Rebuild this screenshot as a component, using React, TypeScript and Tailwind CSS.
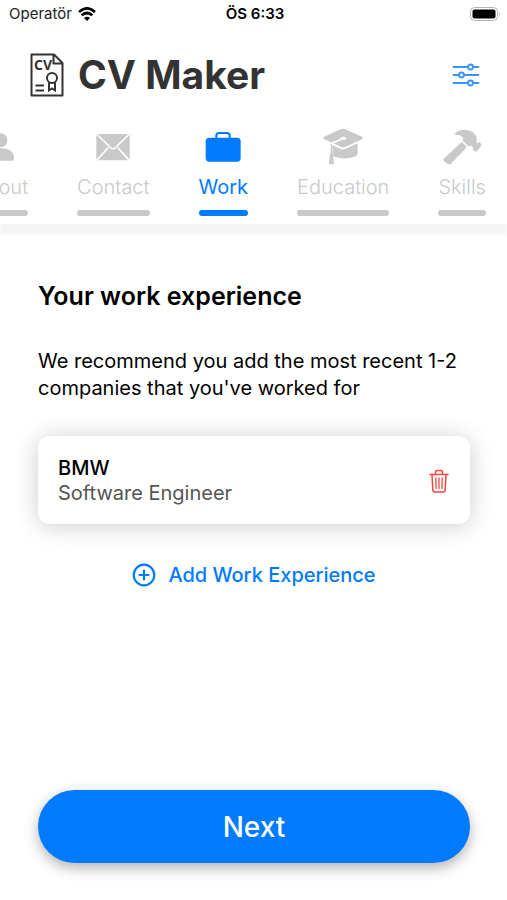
import React, { useState } from 'react';

// --- Types ---
type IconProps = { className?: string };

interface Tab {
  id: string;
  label: string;
  icon: React.FC<IconProps>;
}

interface Job {
  id: number;
  company: string;
  position: string;
}

// --- Icons ---
const PersonIcon = ({ className }: IconProps) => (
  <svg viewBox="-60 0 120 120" fill="currentColor" className={className} aria-hidden="true">
    <ellipse cx="0" cy="40" rx="19" ry="21" />
    <path d="M-39 93c0-19 16-29 39-29s39 10 39 29c0 6-1 8-5 8h-68c-4 0-6-2-6-8z" />
  </svg>
);

const MailIcon = ({ className }: IconProps) => (
  <svg viewBox="-60 0 120 120" className={className} aria-hidden="true">
    <rect x="-50" y="21" width="100" height="79" rx="5" fill="currentColor" />
    <path
      d="M-49 21l43 42q6 6 12 0l43-42M-49 100l35-38M49 100L14 62"
      fill="none"
      stroke="white"
      strokeWidth="5"
    />
  </svg>
);

const BriefcaseIcon = ({ className }: IconProps) => (
  <svg viewBox="-60 0 120 120" fill="currentColor" className={className} aria-hidden="true">
    <rect x="-52" y="32" width="105" height="72" rx="11" />
    <path d="M-20 36V26q0-8 8-8h24q8 0 8 8v10" fill="none" stroke="currentColor" strokeWidth="6" />
  </svg>
);

const EducationIcon = ({ className }: IconProps) => (
  <svg viewBox="-60 0 120 120" fill="currentColor" className={className} aria-hidden="true">
    <path d="M-32 54L-8 66q7 3 14 0l38-17v31q0 4-4 6c-18 11-51 10-68 2q-4-2-4-6z" />
    <path
      d="M-6 6q5-2 11 0l52 23q6 4 0 8L7 60q-6 3-12 0l-52-24q-6-4 0-7z"
      stroke="white"
      strokeWidth="6"
      paintOrder="stroke"
    />
    <path d="M1 34L-31 48q-4 2-4 7v22" fill="none" stroke="white" strokeWidth="5" />
    <ellipse cx="1" cy="34" rx="9" ry="5" fill="white" />
    <path d="M-35 52v32" stroke="currentColor" strokeWidth="4" />
    <path d="M-39 82q4-4 8 0l4 27q0 3-3 3h-9q-3 0-3-3z" />
  </svg>
);

const HammerIcon = ({ className }: IconProps) => (
  <svg viewBox="0 0 120 120" fill="currentColor" className={className} aria-hidden="true">
    <path d="M5 96l51-49q3-3 6 0l10 10q3 3 0 6l-45 47q-5 4-9 1l-13-9q-4-3 0-6z" />
    <path d="M38 20C50 6 72 5 87 13c13 7 18 16 17 27l-1 6 5 4 4-4q2-2 4 1l1 7q1 3-1 6l-12 13q-3 3-6 0l-6-6q-2-3 1-6l-5-5q-5 4-10 0L62 41c6-10-3-17-21-18-4 0-5-1-3-3z" />
  </svg>
);

const SlidersIcon = ({ className }: IconProps) => (
  <svg
    viewBox="0 0 28 24"
    fill="white"
    stroke="currentColor"
    strokeWidth="1.8"
    strokeLinecap="round"
    className={className}
    aria-hidden="true"
  >
    <path d="M1.500 4h25M1.500 12h25M1.500 20h25" />
    <circle cx="18.500" cy="4" r="2.500" />
    <circle cx="9.500" cy="12" r="2.500" />
    <circle cx="18.500" cy="20" r="2.500" />
  </svg>
);

const TrashIcon = ({ className }: IconProps) => (
  <svg
    viewBox="0 0 20 24"
    fill="none"
    stroke="currentColor"
    strokeWidth="1.5"
    strokeLinecap="round"
    strokeLinejoin="round"
    className={className}
    aria-hidden="true"
  >
    <path d="M1 5.500h18M6.500 5.500V3Q6.500 1.500 8 1.500h4Q13.500 1.500 13.500 3v2.500" />
    <path d="M3 5.500l.8 15.500Q3.900 23 6 23h8q2.100 0 2.200-2L17 5.500" />
    <path d="M6.800 9l.3 10.500M10 9v10.500M13.200 9l-.3 10.500" strokeWidth="1.3" />
  </svg>
);

const AddIcon = ({ className }: IconProps) => (
  <svg
    viewBox="0 0 24 24"
    fill="none"
    stroke="currentColor"
    strokeWidth="2.200"
    strokeLinecap="round"
    className={className}
    aria-hidden="true"
  >
    <circle cx="12" cy="12" r="10.300" />
    <path d="M12 7.500v9M7.500 12h9" />
  </svg>
);

const WifiIcon = ({ className }: IconProps) => (
  <svg viewBox="0 0 54 42" fill="none" stroke="black" strokeWidth="8" className={className} aria-hidden="true">
    <path d="M3 15Q27-7 51 15" />
    <path d="M11 25q16-14 32 0" />
    <path d="M27 42l-9-9q9-7 18 0z" fill="black" stroke="none" />
  </svg>
);

const BatteryIcon = ({ className }: IconProps) => (
  <svg viewBox="0 0 31 14" className={className} aria-hidden="true">
    <rect x="0.500" y="0.500" width="27" height="13" rx="4" fill="white" stroke="#b5b5b5" />
    <rect x="2.500" y="2.500" width="23" height="9" rx="2" fill="black" />
    <path d="M29 5q2 2 0 4z" fill="#b5b5b5" />
  </svg>
);

const Logo = ({ className }: IconProps) => (
  <svg
    viewBox="0 0 34 44"
    fill="none"
    stroke="currentColor"
    strokeWidth="2"
    className={className}
    aria-hidden="true"
  >
    <path d="M1.500 1.500h22.500l8.500 8.500v32.500h-31zM23.500 2v8.500h8.500" strokeLinejoin="round" />
    <path d="M5.500 32.500h8.500M5.500 37.500h8.500" />
    <circle cx="22" cy="25" r="5" />
    <path d="M19 29.500v8l3-2 3 2v-8" />
    <text
      x="4"
      y="17"
      fontSize="14"
      fontWeight="700"
      fill="currentColor"
      stroke="none"
      className="font-['Open_Sans',sans-serif]"
    >
      CV
    </text>
  </svg>
);

const tabs: Tab[] = [
  { id: 'about', label: 'About', icon: PersonIcon },
  { id: 'contact', label: 'Contact', icon: MailIcon },
  { id: 'work', label: 'Work', icon: BriefcaseIcon },
  { id: 'education', label: 'Education', icon: EducationIcon },
  { id: 'skills', label: 'Skills', icon: HammerIcon },
];

// --- Components ---
const StatusBar = () => (
  <div className="grid grid-cols-3 items-center h-[27px] pl-[9px] pr-[6px] text-[15px] leading-5">
    <div className="flex items-center gap-[6px] text-[#222]">
      <span>Operatör</span>
      <WifiIcon className="w-[18px] h-[14px]" />
    </div>
    <span className="text-center font-semibold">ÖS 6:33</span>
    <BatteryIcon className="w-[31px] h-[14px] justify-self-end" />
  </div>
);

const Header = () => (
  <header className="flex items-center justify-between h-24 pl-[30px] pr-[27px]">
    <div className="flex items-center gap-[14px] text-[#333]">
      <Logo className="w-[34px] h-[44px]" />
      <h1 className="text-[39px] leading-[48px] font-bold">CV Maker</h1>
    </div>
    <button type="button" aria-label="Settings" className="text-[#3b93f8]">
      <SlidersIcon className="w-7 h-6" />
    </button>
  </header>
);

const TabBar = ({ active, onSelect }: { active: string; onSelect: (id: string) => void }) => (
  <nav className="overflow-hidden pt-1 pb-2">
    <div className="flex gap-[49px] -ml-[27px]">
      {tabs.map((tab) => (
        <button
          key={tab.id}
          type="button"
          onClick={() => onSelect(tab.id)}
          className={`shrink-0 flex flex-col items-center ${
            active === tab.id ? 'text-[#007aff]' : 'text-[#c9c9c9]'
          }`}
        >
          <tab.icon className="w-10 h-10" />
          <span className={`mt-[6px] text-xl leading-7 ${active === tab.id ? 'font-normal' : 'font-light'}`}>
            {tab.label}
          </span>
          <span className="mt-[9px] w-full h-[6px] rounded-full bg-current" />
        </button>
      ))}
    </div>
  </nav>
);

const JobCard = ({ job, onRemove }: { job: Job; onRemove: () => void }) => (
  <li className="flex items-center justify-between rounded-xl bg-white px-5 pt-5 pb-[18px] shadow-[0_2px_24px_rgba(0,0,0,0.2)]">
    <div className="text-xl leading-[25px]">
      <h3 className="font-medium">{job.company}</h3>
      <p className="text-[#555]">{job.position}</p>
    </div>
    <button type="button" aria-label="Delete" onClick={onRemove} className="text-[#f4483e]">
      <TrashIcon className="w-[22px] h-6" />
    </button>
  </li>
);

export default function App() {
  const [activeTab, setActiveTab] = useState('work');
  const [jobs, setJobs] = useState<Job[]>([{ id: 1, company: 'BMW', position: 'Software Engineer' }]);

  const addJob = () => setJobs([...jobs, { id: Date.now(), company: 'Company', position: 'Position' }]);

  return (
    <div className="min-h-screen flex flex-col bg-white text-black font-['Inter',sans-serif]">
      <div className="bg-white shadow-[0_11px_3px_rgba(0,0,0,0.04)]">
        <StatusBar />
        <Header />
        <TabBar active={activeTab} onSelect={setActiveTab} />
      </div>

      <main className="flex-1 flex flex-col pl-[38px] pr-[37px] pt-14 pb-[37px]">
        <h2 className="text-[25px] leading-8 font-semibold">Your work experience</h2>
        <p className="mt-9 text-xl leading-[27px]">
          We recommend you add the most recent 1-2 companies that you've worked for
        </p>

        <ul className="mt-[34px] space-y-5">
          {jobs.map((job) => (
            <JobCard key={job.id} job={job} onRemove={() => setJobs(jobs.filter((j) => j.id !== job.id))} />
          ))}
        </ul>

        <button
          type="button"
          onClick={addJob}
          className="mt-9 self-center flex items-center gap-3 text-xl leading-[30px] font-medium text-[#007aff]"
        >
          <AddIcon className="w-6 h-6" />
          Add Work Experience
        </button>

        <button
          type="button"
          className="mt-auto h-[73px] shrink-0 rounded-full bg-[#007aff] text-[28px] font-medium text-white shadow-[0_5px_14px_rgba(0,0,0,0.3)]"
        >
          Next
        </button>
      </main>
    </div>
  );
}
